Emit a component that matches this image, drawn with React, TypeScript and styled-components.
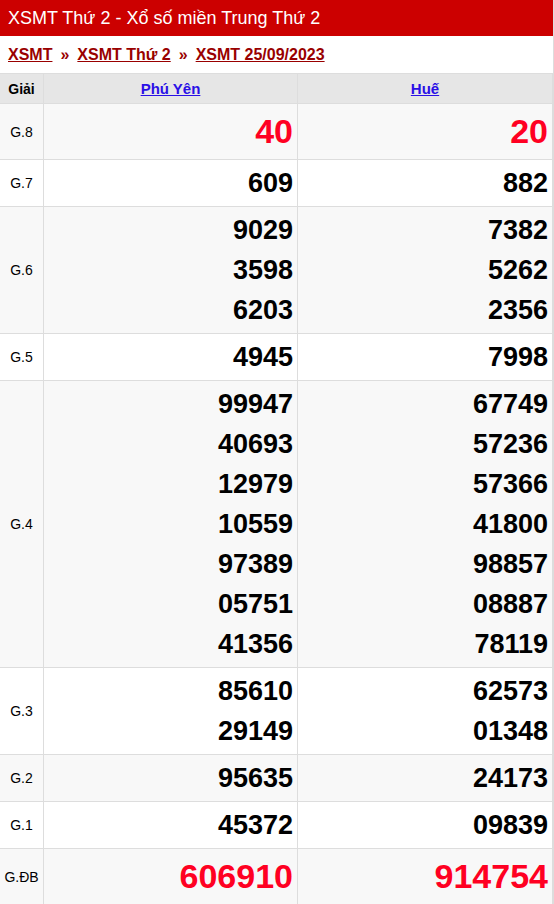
import React from 'react'
import styled, { createGlobalStyle } from 'styled-components'

const GlobalStyle = createGlobalStyle`
  body {
    margin: 0;
    background: #fff;
    font-family: "Liberation Sans", Arial, sans-serif;
  }
`

const Page = styled.div`
  width: 553px;
  border-right: 1px solid #ddd;
`

const TopBar = styled.h1`
  margin: 0;
  height: 36px;
  line-height: 36px;
  padding: 0 8px;
  background-color: #cc0000;
  color: #fff;
  font-size: 18px;
  font-weight: normal;
`

const Crumbs = styled.div`
  display: flex;
  align-items: center;
  height: 37px;
  padding: 0 8px;
  font-size: 16px;
  font-weight: bold;
  color: #990000;

  a {
    color: #990000;
    text-decoration: underline;
  }
`

const Sep = styled.span`
  margin: 0 8px;
`

const Table = styled.div`
  border-top: 1px solid #ddd;
`

const Row = styled.div<{ $shade?: 'head' | 'odd' | 'even' }>`
  display: grid;
  grid-template-columns: 44px 254px 255px;
  border-bottom: 1px solid #ddd;
  background-color: ${(p) =>
    p.$shade === 'head' ? '#e6e6e6' : p.$shade === 'odd' ? '#f8f8f8' : '#fff'};
`

const Label = styled.div`
  display: flex;
  align-items: center;
  justify-content: center;
  border-right: 1px solid #ddd;
  font-size: 14px;
  color: #000;
`

const HeadLabel = styled(Label)`
  height: 29px;
  font-weight: bold;
`

const HeadCell = styled.div`
  display: flex;
  align-items: center;
  justify-content: center;
  border-right: 1px solid #ddd;
  font-size: 15px;
  font-weight: bold;

  a {
    color: #2a10e6;
    text-decoration: underline;
  }
`

const NumCell = styled.div`
  display: flex;
  flex-direction: column;
  align-items: flex-end;
  padding: 3px 4px 3px 0;
  border-right: 1px solid #ddd;
`

const Num = styled.div<{ $big?: boolean }>`
  font-weight: bold;
  font-size: ${(p) => (p.$big ? '34px' : '27px')};
  line-height: ${(p) => (p.$big ? '49px' : '40px')};
  color: ${(p) => (p.$big ? '#ff0022' : '#000')};
`

type Prize = { name: string; a: string[]; b: string[]; big?: boolean }

const prizes: Prize[] = [
  { name: 'G.8', a: ['40'], b: ['20'], big: true },
  { name: 'G.7', a: ['609'], b: ['882'] },
  { name: 'G.6', a: ['9029', '3598', '6203'], b: ['7382', '5262', '2356'] },
  { name: 'G.5', a: ['4945'], b: ['7998'] },
  {
    name: 'G.4',
    a: ['99947', '40693', '12979', '10559', '97389', '05751', '41356'],
    b: ['67749', '57236', '57366', '41800', '98857', '08887', '78119'],
  },
  { name: 'G.3', a: ['85610', '29149'], b: ['62573', '01348'] },
  { name: 'G.2', a: ['95635'], b: ['24173'] },
  { name: 'G.1', a: ['45372'], b: ['09839'] },
  { name: 'G.ĐB', a: ['606910'], b: ['914754'], big: true },
]

const App = (): JSX.Element => {
  return (
    <Page>
      <GlobalStyle />
      <TopBar>XSMT Thứ 2 - Xổ số miền Trung Thứ 2</TopBar>
      <Crumbs>
        <a href="#">XSMT</a>
        <Sep>»</Sep>
        <a href="#">XSMT Thứ 2</a>
        <Sep>»</Sep>
        <a href="#">XSMT 25/09/2023</a>
      </Crumbs>
      <Table>
        <Row $shade="head">
          <HeadLabel>Giải</HeadLabel>
          <HeadCell>
            <a href="#">Phú Yên</a>
          </HeadCell>
          <HeadCell>
            <a href="#">Huế</a>
          </HeadCell>
        </Row>
        {prizes.map((p, i) => (
          <Row key={p.name} $shade={i % 2 === 0 ? 'odd' : 'even'}>
            <Label>{p.name}</Label>
            <NumCell>
              {p.a.map((n, j) => (
                <Num key={j} $big={p.big}>
                  {n}
                </Num>
              ))}
            </NumCell>
            <NumCell>
              {p.b.map((n, j) => (
                <Num key={j} $big={p.big}>
                  {n}
                </Num>
              ))}
            </NumCell>
          </Row>
        ))}
      </Table>
    </Page>
  )
}

export default App
